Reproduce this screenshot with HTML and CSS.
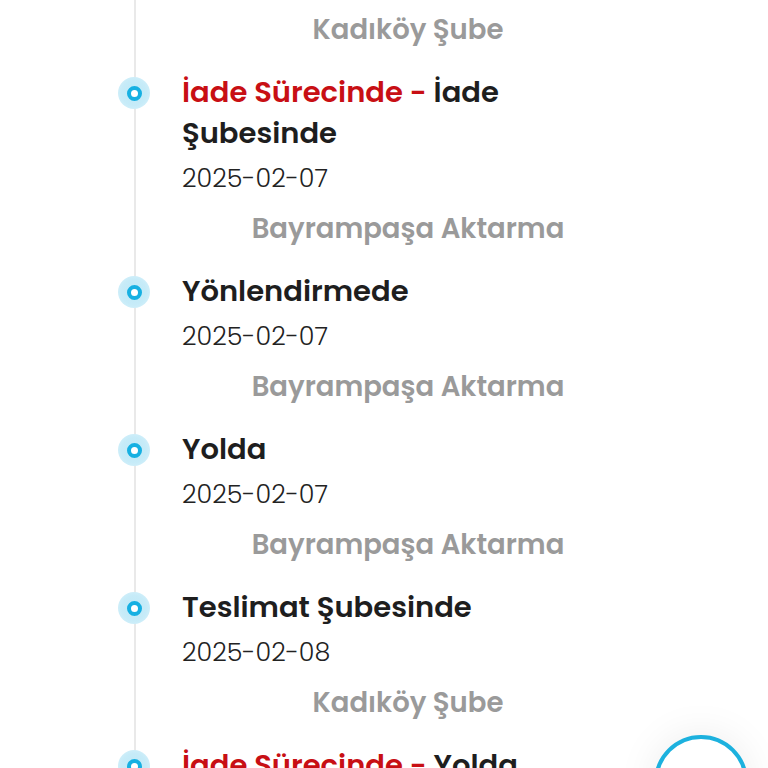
FILE: index.html
```html
<!DOCTYPE html>
<html lang="tr">
<head>
<meta charset="utf-8">
<link rel="stylesheet" href="styles.css">
</head>
<body>
<div class="timeline">
  <div class="loc loc-top">Kadıköy Şube</div>
  <div class="item">
    <div class="marker"><span class="dot"></span></div>
    <div class="body">
      <div class="title"><span class="red">İade Sürecinde - </span>İade Şubesinde</div>
      <div class="date">2025-02-07</div>
      <div class="loc">Bayrampaşa Aktarma</div>
    </div>
  </div>
  <div class="item">
    <div class="marker"><span class="dot"></span></div>
    <div class="body">
      <div class="title">Yönlendirmede</div>
      <div class="date">2025-02-07</div>
      <div class="loc">Bayrampaşa Aktarma</div>
    </div>
  </div>
  <div class="item">
    <div class="marker"><span class="dot"></span></div>
    <div class="body">
      <div class="title">Yolda</div>
      <div class="date">2025-02-07</div>
      <div class="loc">Bayrampaşa Aktarma</div>
    </div>
  </div>
  <div class="item">
    <div class="marker"><span class="dot"></span></div>
    <div class="body">
      <div class="title">Teslimat Şubesinde</div>
      <div class="date">2025-02-08</div>
      <div class="loc">Kadıköy Şube</div>
    </div>
  </div>
  <div class="item">
    <div class="marker"><span class="dot"></span></div>
    <div class="body">
      <div class="title"><span class="red">İade Sürecinde - </span>Yolda</div>
      <div class="date">2025-02-08</div>
    </div>
  </div>
</div>
<div class="fab"></div>
</body>
</html>
```
FILE: styles.css
```css
html, body {
  margin: 0;
  padding: 0;
  background: #ffffff;
  height: 768px;
  overflow: hidden;
}
body {
  font-family: "Poppins", "Open Sans", "Noto Sans", sans-serif;
  color: #1e1e1e;
}
.timeline {
  position: relative;
  padding: 12px 0 0 118px;
  display: flex;
  flex-direction: column;
  gap: 24px;
}
.timeline::before {
  content: "";
  position: absolute;
  left: 134px;
  top: 0;
  bottom: 0;
  width: 2px;
  background: #e9e9e9;
}
.loc-top {
  margin-left: 64px;
  width: 452px;
}
.item {
  display: grid;
  grid-template-columns: 32px 452px;
  column-gap: 32px;
  position: relative;
}
.marker {
  width: 32px;
  height: 32px;
  margin-top: 5px;
  border-radius: 50%;
  background: radial-gradient(circle, #bfe9f7 0%, #c6ebf8 55%, #dcf3fb 100%);
  display: flex;
  align-items: center;
  justify-content: center;
  position: relative;
  z-index: 1;
}
.dot {
  width: 7px;
  height: 7px;
  border-radius: 50%;
  border: 4.5px solid #16b0e2;
  background: #ffffff;
}
.title {
  font-size: 29px;
  font-weight: 600;
  line-height: 41px;
  color: #1e1e1e;
}
.red {
  color: #c80f14;
}
.date {
  font-size: 25.4px;
  font-weight: 300;
  line-height: 36px;
  margin-top: 6px;
  color: #222222;
}
.loc {
  font-size: 27.5px;
  font-weight: 600;
  line-height: 36px;
  color: #9a9a9a;
  text-align: center;
}
.body .loc {
  margin-top: 15px;
}
.fab {
  position: fixed;
  left: 654px;
  top: 735px;
  width: 86px;
  height: 86px;
  border-radius: 50%;
  border: 4px solid #1cb1de;
  background: #ffffff;
  box-shadow: 0 0 40px rgba(0, 0, 0, 0.08);
}
```
